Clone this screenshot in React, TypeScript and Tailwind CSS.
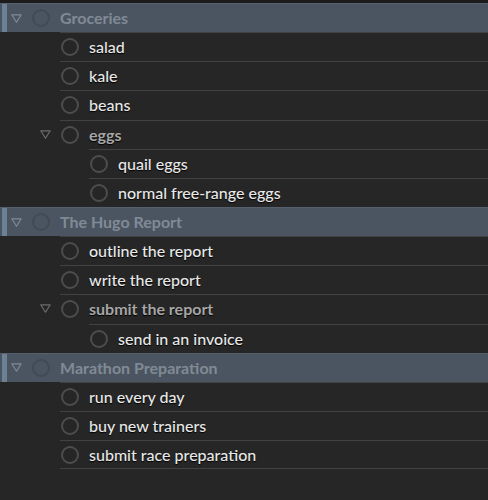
type Item = { label: string; level: 1 | 2; parent?: boolean };
type Group = { title: string; items: Item[] };

const groups: Group[] = [
  {
    title: 'Groceries',
    items: [
      { label: 'salad', level: 1 },
      { label: 'kale', level: 1 },
      { label: 'beans', level: 1 },
      { label: 'eggs', level: 1, parent: true },
      { label: 'quail eggs', level: 2 },
      { label: 'normal free-range eggs', level: 2 },
    ],
  },
  {
    title: 'The Hugo Report',
    items: [
      { label: 'outline the report', level: 1 },
      { label: 'write the report', level: 1 },
      { label: 'submit the report', level: 1, parent: true },
      { label: 'send in an invoice', level: 2 },
    ],
  },
  {
    title: 'Marathon Preparation',
    items: [
      { label: 'run every day', level: 1 },
      { label: 'buy new trainers', level: 1 },
      { label: 'submit race preparation', level: 1 },
    ],
  },
];

const Triangle = ({ color }: { color: string }) => (
  <svg width="11" height="9" viewBox="0 0 11 9" fill="none">
    <polygon points="0.8,0.8 10.2,0.8 5.5,8.2" stroke={color} strokeWidth="1.2" strokeLinejoin="round" />
  </svg>
);

const Header = ({ title }: { title: string }) => (
  <div className="flex h-[29.15px] items-center bg-[#4b5561] border-t border-[#56616d]">
    <div className="ml-[2px] w-[5px] self-stretch bg-[#6c8096]" />
    <div className="flex w-[18px] justify-center">
      <Triangle color="#7f8a97" />
    </div>
    <div className="ml-[7px] h-[18px] w-[18px] rounded-full border-2 border-[#414a55]" />
    <span className="ml-[10px] text-[16px] font-bold text-[#808a95]">{title}</span>
  </div>
);

const Row = ({ item, last }: { item: Item; last: boolean }) => (
  <div className={item.level === 1 ? 'flex h-[29.15px] pl-[31px]' : 'flex h-[29.15px] pl-[60px]'}>
    <div className="flex w-[29px] items-center justify-center">
      {item.parent && <Triangle color="#6b6b6b" />}
    </div>
    <div
      className={
        last
          ? 'flex flex-1 items-center border-t border-b border-[#424242]'
          : 'flex flex-1 items-center border-t border-[#424242]'
      }
    >
      <div className="ml-px h-[18px] w-[18px] rounded-full border-2 border-[#4d4d4d]" />
      <span
        className={
          item.parent
            ? 'ml-[10px] text-[16px] font-bold text-[#a6a6a6] [text-shadow:0_1px_1px_#000]'
            : 'ml-[10px] text-[16px] font-medium text-[#e8e8e8] [text-shadow:0_1px_1px_#000]'
        }
      >
        {item.label}
      </span>
    </div>
  </div>
);

export default function App() {
  return (
    <div className="h-[500px] w-[488px] overflow-hidden bg-[#262626] font-['Lato','Open_Sans',sans-serif]">
      <div className="h-[3px] bg-[#1c1c1c]" />
      {groups.map((g, gi) => (
        <div key={g.title}>
          <Header title={g.title} />
          {g.items.map((it, i) => (
            <Row
              key={it.label}
              item={it}
              last={gi === groups.length - 1 && i === g.items.length - 1}
            />
          ))}
        </div>
      ))}
    </div>
  );
}
